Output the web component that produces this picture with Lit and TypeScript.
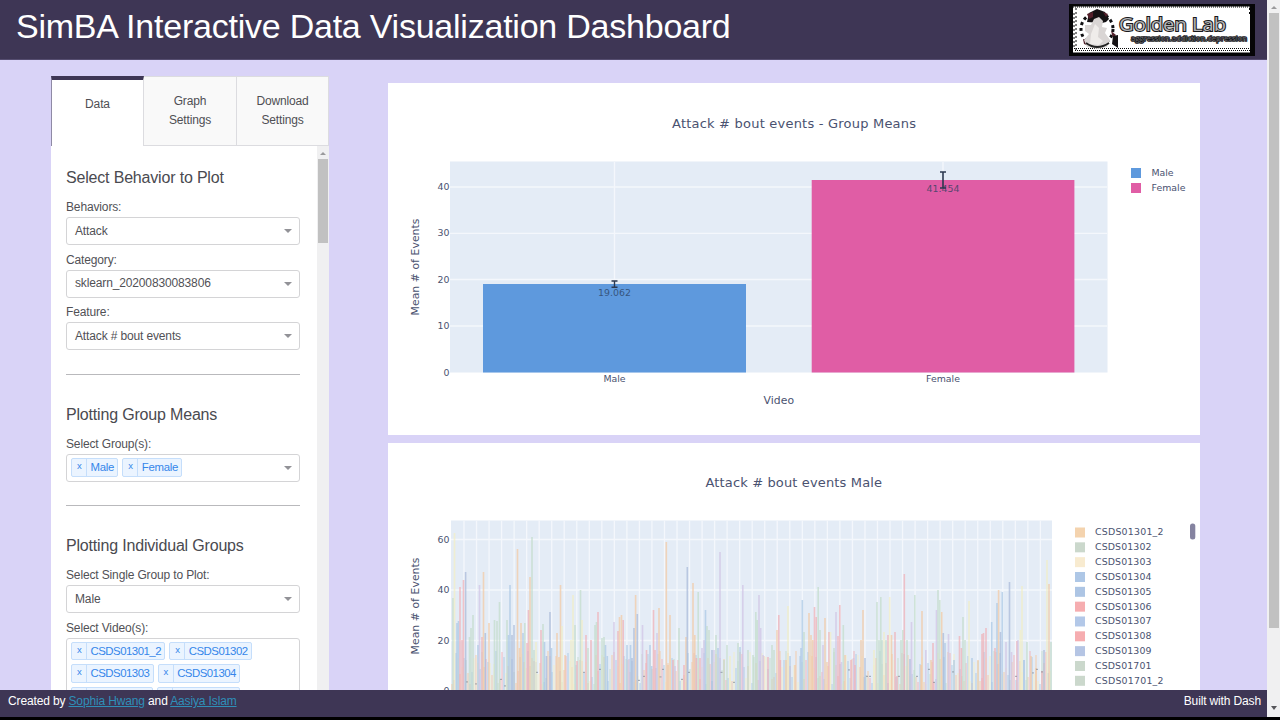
import { LitElement, html, svg, css } from "lit";
import { customElement, property } from "lit/decorators.js";

type Bar = [number, number, string];

const TINTS: Record<string, string> = {
  o: "#f3c9a2",
  y: "#f3efc4",
  g: "#c2dccb",
  b: "#a9c8e4",
  s: "#a8b9d8",
  r: "#f0afb6",
  p: "#d0c4e4",
};

// Tall bars of the individual plot: x, top y, tint.
const PEAKS: Bar[] = [
  [453, 598, "g"], [454.5, 533, "y"], [457, 623, "b"], [458.5, 621, "b"], [460, 587, "r"], [462, 640, "r"], [463.5, 580, "r"], [465.6, 572, "s"],
  [469.5, 637, "g"], [471, 628, "g"], [473, 615, "g"], [478, 645, "b"], [479.5, 585, "p"], [482, 637, "r"], [483.5, 572, "o"], [485.3, 633, "s"],
  [489, 623, "o"], [494.5, 620, "g"], [497, 621, "g"], [499.5, 602, "g"], [507, 620, "g"], [508.5, 635, "b"], [510, 585, "b"], [512, 635, "s"], [514, 625, "s"],
  [517.5, 549, "o"], [519.5, 648, "o"], [521, 623, "o"], [523, 633, "b"], [524.8, 623, "g"], [527, 643, "r"], [528.5, 610, "r"], [530, 577, "o"], [532, 537, "g"], [534, 650, "g"],
  [536, 642, "y"], [541, 630, "r"], [543, 624, "g"], [544.5, 642, "b"], [546.5, 656, "s"], [550, 612, "s"], [551.5, 648, "b"], [557, 633, "o"], [559, 657, "o"], [560.5, 585, "o"],
  [562, 626, "y"], [565, 655, "o"], [571, 640, "y"], [573, 595, "y"], [575, 625, "g"], [577, 661, "r"], [580.5, 590, "g"], [582, 620, "y"], [586, 635, "r"], [588, 648, "g"],
  [591, 640, "r"], [595, 625, "g"], [596.5, 622, "g"], [598, 612, "r"], [602, 638, "g"], [604, 637, "g"], [605.5, 645, "b"], [607.3, 656, "b"], [614, 622, "p"], [618, 631, "r"],
  [619.5, 617, "o"], [621.5, 615, "o"], [623.2, 620, "r"], [627, 645, "b"], [629, 659, "p"], [630.5, 645, "b"], [632, 658, "s"], [634, 628, "s"], [635.6, 595, "o"], [637.3, 614, "s"],
  [642.5, 625, "p"], [646.5, 650, "r"], [650, 645, "b"], [651.7, 666, "b"], [653.5, 610, "r"], [655, 650, "r"], [657, 633, "p"], [659, 608, "o"], [666.3, 542, "o"], [668, 665, "o"],
  [670, 615, "o"], [673, 660, "r"], [675, 666, "p"], [679, 628, "g"], [684, 665, "r"], [686, 637, "o"], [687.3, 567, "s"], [693, 583, "o"], [694.8, 635, "o"], [696.5, 658, "r"], [698.2, 592, "g"],
  [700, 658, "r"], [702, 648, "p"], [704, 640, "p"], [705.5, 610, "b"], [707, 626, "g"], [709, 630, "g"], [712, 650, "s"], [714, 650, "p"], [716, 635, "g"], [718, 648, "b"],
  [720, 552, "p"], [724, 660, "g"], [727, 645, "g"], [730, 656, "y"], [738, 643, "g"], [740, 647, "b"], [742.8, 585, "p"], [748, 650, "g"], [753, 655, "g"], [755.8, 612, "g"], [757.2, 620, "g"],
  [759, 595, "p"], [760.7, 628, "p"], [763, 655, "p"], [768, 657, "r"], [772, 645, "g"], [774, 650, "g"], [777, 630, "o"], [778.8, 615, "r"], [780.4, 660, "r"], [786, 660, "o"], [788, 606, "y"],
  [790, 656, "b"], [795, 665, "o"], [801, 648, "b"], [802.3, 600, "b"], [804, 632, "g"], [809, 613, "o"], [811, 635, "o"], [812.8, 640, "o"], [814.5, 607, "r"], [816.2, 617, "r"], [818.2, 587, "g"],
  [820, 630, "g"], [823, 645, "p"], [825, 618, "o"], [827, 662, "o"], [829, 632, "r"], [830.5, 632, "y"], [834, 648, "g"], [836, 612, "p"], [838, 636, "r"], [839.8, 605, "r"], [841.5, 662, "p"], [843.3, 625, "g"],
  [845, 655, "o"], [851, 660, "r"], [853.5, 658, "p"], [855, 665, "r"], [861, 640, "o"], [863, 610, "o"], [865, 658, "s"], [874, 650, "y"], [877, 602, "g"], [879, 640, "g"], [880.8, 597, "g"], [882, 640, "g"],
  [884, 632, "y"], [886, 640, "g"], [888, 635, "r"], [889.7, 597, "y"], [891.5, 635, "o"], [895, 632, "r"], [897, 676, "r"], [901, 640, "g"], [902.8, 630, "g"], [904.3, 574, "r"], [907, 640, "g"],
  [910, 659, "s"], [911.5, 622, "p"], [914.8, 595, "g"], [921, 665, "o"], [922, 611, "o"], [925.8, 650, "p"], [931, 660, "o"], [933, 643, "r"], [936.5, 610, "p"], [938, 590, "g"], [939.8, 600, "g"], [941.7, 612, "o"],
  [943.3, 633, "s"], [945, 643, "b"], [948.5, 634, "p"], [954, 660, "b"], [959.5, 636, "r"], [961.5, 648, "r"], [963, 617, "g"], [965, 640, "g"], [969, 601, "y"], [972, 658, "b"], [978, 660, "o"], [982, 634, "r"],
  [983.5, 633, "r"], [986, 628, "r"], [991.7, 622, "b"], [995, 648, "r"], [997, 603, "b"], [998.6, 590, "o"], [1000.5, 632, "s"], [1002.3, 592, "b"], [1006, 642, "p"], [1009.5, 582, "s"], [1011.5, 652, "p"], [1017, 641, "r"], [1018, 640, "p"],
  [1020.3, 630, "y"], [1022, 586, "y"], [1024, 660, "b"], [1027, 642, "g"], [1031, 656, "o"], [1036, 668, "o"], [1042, 671, "r"], [1044, 650, "s"], [1047, 560, "y"], [1049, 584, "o"], [1051, 642, "g"],
];

// Short bars that fill the gaps between the peaks.
const TINT_ORDER = "oygbyrpogybgyo";
const LOW_BARS: Bar[] = Array.from({ length: 300 }, (_, i): Bar => [
  452 + i * 2,
  690 - (6 + ((i * 37 + ((i * i * 7) % 23) * 5) % 34)),
  TINT_ORDER[(i * 5 + (i >> 2)) % TINT_ORDER.length],
]);

const CAPS: [number, number][] = [
  [467, 682], [476, 684], [501, 679.5], [505, 686], [537, 672.5], [584, 672.5], [600, 669.5], [639, 680.5], [644, 676.5],
  [660.5, 677], [663, 669.5], [682, 679.5], [689, 672.5], [721.5, 672.5], [734, 682.5], [849, 670], [867, 676.5], [870, 676.5],
  [899, 676.5], [917, 676.5], [929, 669.5], [934, 682.5], [953, 672], [1016, 676.5], [1033, 673], [1037, 669.5], [1042, 672],
];

const LEGEND: [string, string][] = [
  ["CSDS01301_2", "#f4d3ae"], ["CSDS01302", "#cbd8cc"], ["CSDS01303", "#f8ebd0"], ["CSDS01304", "#aec7e6"],
  ["CSDS01305", "#adc5e4"], ["CSDS01306", "#f6adb0"], ["CSDS01307", "#b3c8e8"], ["CSDS01308", "#f6adb0"],
  ["CSDS01309", "#b5c5e4"], ["CSDS01701", "#cbd8cc"], ["CSDS01701_2", "#cbd8cc"],
];

const chartText = css`
  :host { display: block; background: #fff; }
  svg { display: block; width: 100%; height: 100%; }
  text { font-family: "DejaVu Sans", Verdana, sans-serif; fill: #4a5270; }
  .title { font-size: 13px; }
  .axis { font-size: 10.8px; }
  .tick { font-size: 9.4px; }
  .end { text-anchor: end; }
  .value { font-size: 9.4px; fill: #2a3f5f; opacity: 0.75; }
  .plot { fill: #e4ecf6; }
  .grid { stroke: #f4f7fc; stroke-width: 1.3; fill: none; }
  .err { stroke: #2b3850; fill: none; }
`;

@customElement("means-chart")
class MeansChart extends LitElement {
  static styles = chartText;

  render() {
    return html`
      <svg viewBox="388 83 812 352">
        <text class="title" x="672" y="128" textLength="244">Attack # bout events - Group Means</text>
        <rect class="plot" x="450" y="161.5" width="657.5" height="211"></rect>
        <path class="grid" d="M450 187H1107 M450 233.3H1107 M450 279.5H1107 M450 326H1107 M614.5 162V372 M943 162V372"></path>
        <rect x="483" y="284" width="263" height="88.5" fill="#5e99dd"></rect>
        <rect x="811.7" y="180" width="262.7" height="192.5" fill="#e05da5"></rect>
        <text class="value" x="598" y="296" textLength="33">19.062</text>
        <text class="value" x="926.5" y="192" textLength="33">41.454</text>
        <path class="err" stroke-width="1.4" d="M614.5 281V287.3 M611.5 281H617.5 M611.5 287.3H617.5"></path>
        <path class="err" stroke-width="1.6" d="M943 172V188 M940 172H946 M940 188H946"></path>
        ${[40, 30, 20, 10, 0].map(
          (n, i) => svg`<text class="tick end" x="449.5" y=${189.7 + i * 46.5}>${n}</text>`,
        )}
        <text class="tick" x="603.5" y="382" textLength="22">Male</text>
        <text class="tick" x="926" y="382" textLength="34">Female</text>
        <text class="axis" x="763.5" y="404" textLength="30.5">Video</text>
        <text class="axis" transform="translate(418.5 315.5) rotate(-90)" textLength="97">Mean # of Events</text>
        <rect x="1131" y="168" width="10" height="10" fill="#5e99dd"></rect>
        <rect x="1131" y="183" width="10" height="10" fill="#e05da5"></rect>
        <text class="tick" x="1151.5" y="176" textLength="22">Male</text>
        <text class="tick" x="1151.5" y="191" textLength="34">Female</text>
      </svg>
    `;
  }
}

@customElement("group-chart")
class GroupChart extends LitElement {
  static styles = chartText;

  render() {
    const vertical = Array.from({ length: 47 }, (_, i) => `M${464 + i * 12.53} 520.5V690`).join(" ");
    const bar = ([x, y, tint]: Bar, opacity: number) =>
      svg`<rect x=${x - 0.8} y=${y} width="1.6" height=${690 - y} fill=${TINTS[tint]} opacity=${opacity}></rect>`;
    return html`
      <svg viewBox="388 443 812 247">
        <text class="title" x="705.5" y="487" textLength="176.5">Attack # bout events Male</text>
        <rect class="plot" x="451" y="520.5" width="601" height="170"></rect>
        <path class="grid" d="${vertical} M451 539.5H1052 M451 590H1052 M451 640.5H1052"></path>
        ${LOW_BARS.map((b) => bar(b, 0.55))}
        ${PEAKS.map((b) => bar(b, 0.72))}
        ${CAPS.map(([x, y]) => svg`<rect x=${x - 1} y=${y - 0.7} width="2" height="1.2" fill="#7f8593" opacity="0.6"></rect>`)}
        ${[60, 40, 20, 0].map(
          (n, i) => svg`<text class="tick end" x="449.5" y=${543 + i * 50.4}>${n}</text>`,
        )}
        <text class="axis" transform="translate(418.5 654.5) rotate(-90)" textLength="97">Mean # of Events</text>
        ${LEGEND.map(
          ([name, color], i) => svg`
            <rect x="1075" y=${527.5 + i * 14.83} width="10" height="10" fill=${color}></rect>
            <text class="tick" x="1095" y=${535.4 + i * 14.83} textLength=${name.length > 9 ? 68.5 : 56.5}>${name}</text>`,
        )}
        <rect x="1190" y="523.5" width="5.3" height="16" rx="2.5" fill="#8583a0"></rect>
      </svg>
    `;
  }
}

@customElement("select-box")
class SelectBox extends LitElement {
  @property() label = "";
  @property() value = "";
  @property({ type: Array }) chips: string[] = [];
  @property({ type: Boolean }) tall = false;

  static styles = css`
    :host { display: block; color: #515156; }
    .label { padding-top: 5.5px; height: 19px; line-height: 19px; }
    .box {
      box-sizing: border-box; height: 28px; border: 1px solid #d4d4d6; border-radius: 3px;
      display: flex; align-items: center; justify-content: space-between; padding: 0 7px 0 8px; background: #fff;
    }
    .box.multi { padding-left: 4px; }
    .box.tall { height: 80px; align-items: flex-start; padding-top: 3px; }
    .value { padding-bottom: 0.4px; }
    .arrow { border: 4px solid transparent; border-top-color: #929297; border-bottom: 0; }
    .chips { display: flex; flex-wrap: wrap; gap: 4px; }
    .tall .chips { width: 190px; }
    .chip {
      box-sizing: border-box; height: 18.7px; display: flex; border: 1px solid #c5defb;
      border-radius: 2px; background: #ebf4ff; color: #3586ea; font-size: 11.4px; line-height: 16px; letter-spacing: -0.5px;
    }
    .x { width: 14px; text-align: center; border-right: 1px solid #c5defb; font-size: 9.5px; line-height: 14.5px; }
    .name { padding: 0 3.3px 0 3.5px; }
    .short .name { letter-spacing: -0.3px; }
    .name:empty { width: 58.5px; }
  `;

  render() {
    const multi = this.chips.length > 0;
    return html`
      <div class="label">${this.label}</div>
      <div class="box ${multi ? "multi" : ""} ${this.tall ? "tall" : "short"}">
        ${multi
          ? html`<div class="chips">
              ${this.chips.map(
                (c) => html`<div class="chip"><span class="x">${c ? "x" : ""}</span><span class="name">${c || null}</span></div>`,
              )}
            </div>`
          : html`<span class="value">${this.value}</span>`}
        ${this.tall ? "" : html`<span class="arrow"></span>`}
      </div>
    `;
  }
}

@customElement("lab-logo")
class LabLogo extends LitElement {
  static styles = css`
    :host { display: block; width: 186px; height: 52px; }
    svg { display: block; }
    .name {
      font: 500 18.5px "Open Sans", sans-serif; fill: #b4b4b6; stroke: #19191b; stroke-width: 2px; paint-order: stroke;
    }
    .sub { font: 7.6px "Open Sans", sans-serif; fill: #6a6a70; stroke: #17171a; stroke-width: 1.7px; paint-order: stroke; }
  `;

  render() {
    return html`
      <svg width="186" height="52" viewBox="0 0 186 52">
        <rect width="186" height="52" fill="#050507"></rect>
        <rect x="4" y="2.5" width="177" height="46" fill="#fff"></rect>
        <path d="M4 3H181" stroke="#050507" stroke-dasharray="1 1"></path>
        <path d="M7 4V48 M5 9V44 M180.5 4V11" stroke="#050507" stroke-dasharray="2 2"></path>
        <path d="M5 44.5H182 M6 46.5H181" stroke="#050507" stroke-dasharray="1 1"></path>
        <circle cx="28" cy="25" r="16" fill="none" stroke="#111113" stroke-width="3" stroke-dasharray="3 3"></circle>
        <path d="M18 18L20 9L28 5L36 8L40 15L37 18L33 19Z" fill="#151214"></path>
        <path d="M18 10L24 8V13L20 15Z M34 8L39 10L37 13Z M42 27L47 31L44 34Z M14 35L20 37V42L15 40Z" fill="#54202b"></path>
        <path d="M25 15L30 13L34 17L33 23L38 24L36 29L41 36L38 43L29 45L18 43L15 36L20 30L16 27V21L22 21Z" fill="#d9d5d4"></path>
        <path d="M26 20L30 24L29 33L34 37L30 41L21 40L22 30Z" fill="#efecea"></path>
        <path d="M44 32L49 31V44L43 40Z" fill="#151214"></path>
        <path d="M17 39Q28 47 40 39" fill="none" stroke="#222" stroke-width="2"></path>
        <text class="name" x="50" y="27" textLength="107" lengthAdjust="spacingAndGlyphs">Golden Lab</text>
        <text class="sub" x="62" y="37" textLength="116" lengthAdjust="spacingAndGlyphs">aggression.addiction.depression</text>
      </svg>
    `;
  }
}

@customElement("app-root")
class AppRoot extends LitElement {
  static styles = css`
    :host {
      display: grid; grid-template-rows: 717px 3px; width: 1280px; height: 720px; overflow: hidden;
      font: 12px "Liberation Sans", Arial, sans-serif; letter-spacing: -0.14px; color: #4f4f54; background: #000;
    }
    .window { display: grid; grid-template-columns: 1267px 13px; height: 717px; }
    .page { display: grid; grid-template-rows: 60px 630px 27px; background: #d9d3f7; }
    header {
      background: #3e3655; display: flex; justify-content: space-between; align-items: flex-start;
      padding: 4px 12px 0 16px; box-sizing: border-box; border-bottom: 1px solid #554d70;
    }
    h1 { margin: 0; font-size: 34px; letter-spacing: -0.23px; line-height: 45px; font-weight: 400; color: #fff; white-space: nowrap; }
    main { display: flex; overflow: hidden; padding-left: 51px; gap: 59px; }
    .side { width: 278px; padding-top: 16px; display: flex; flex-direction: column; flex: none; }
    .tabs { display: grid; grid-template-columns: 93px 93px 92px; height: 70px; flex: none; }
    .tab {
      box-sizing: border-box; border: 1px solid #dcdce0; border-left-width: 0; background: #f9f9f9;
      display: flex; align-items: center; justify-content: center; text-align: center; line-height: 19px; padding: 0 16px 1px;
    }
    .tab.on { background: #fff; border: 0; border-top: 4px solid #3e3655; border-left: 1px solid #8f8aa5; border-right: 1px solid #dcdce0; padding-bottom: 18px; }
    .body { display: grid; grid-template-columns: 266px 12px; height: 544px; overflow: hidden; background: #fff; }
    .form { padding: 22px 17px 0 15px; }
    h2 { margin: 0 0 4.5px; font-size: 16px; letter-spacing: -0.18px; line-height: 20px; height: 20px; font-weight: 400; color: #4a4a50; }
    hr { border: 0; height: 1px; background: #b9b9bc; margin: 23.5px 0 30px; }
    .bar { background: #f0f0f1; display: flex; flex-direction: column; align-items: center; }
    .up, .down { border: 3px solid transparent; }
    .up { border-bottom: 3px solid #9a9a9c; border-top: 0; }
    .down { border-top: 4px solid #55555a; border-bottom: 0; margin-top: auto; margin-bottom: 7px; }
    .thumb { background: #c1c1c1; width: 10px; }
    .bar.inner .up { margin: 6px 0 4px; }
    .bar.inner .thumb { height: 84px; }
    .bar.outer .up { margin: 6px 0 4px; }
    .bar.outer .thumb { height: 615px; width: 10px; }
    .charts { width: 812px; padding-top: 23px; display: flex; flex-direction: column; gap: 8px; flex: none; letter-spacing: 0; }
    means-chart { height: 352px; }
    group-chart { height: 247px; flex: none; }
    footer {
      background: #3e3655; color: #fff; display: flex; justify-content: space-between; align-items: center;
      padding: 0 6px 5px 8px; box-sizing: border-box;
    }
    lab-logo { letter-spacing: 0; }
    a { color: #2f8fb8; text-decoration: underline; }
  `;

  render() {
    return html`
      <div class="window">
        <div class="page">
          <header><h1>SimBA Interactive Data Visualization Dashboard</h1><lab-logo></lab-logo></header>
          <main>
            <div class="side">
              <div class="tabs">
                <div class="tab on">Data</div>
                <div class="tab">Graph Settings</div>
                <div class="tab">Download Settings</div>
              </div>
              <div class="body">
                <div class="form">
                  <h2>Select Behavior to Plot</h2>
                  <select-box label="Behaviors:" value="Attack"></select-box>
                  <select-box label="Category:" value="sklearn_20200830083806"></select-box>
                  <select-box label="Feature:" value="Attack # bout events"></select-box>
                  <hr />
                  <h2>Plotting Group Means</h2>
                  <select-box label="Select Group(s):" .chips=${["Male", "Female"]}></select-box>
                  <hr />
                  <h2>Plotting Individual Groups</h2>
                  <select-box label="Select Single Group to Plot:" value="Male"></select-box>
                  <select-box
                    label="Select Video(s):"
                    tall
                    .chips=${["CSDS01301_2", "CSDS01302", "CSDS01303", "CSDS01304", "", ""]}
                  ></select-box>
                </div>
                <div class="bar inner"><span class="up"></span><span class="thumb"></span></div>
              </div>
            </div>
            <div class="charts"><means-chart></means-chart><group-chart></group-chart></div>
          </main>
          <footer>
            <span>Created by <a>Sophia Hwang</a> and <a>Aasiya Islam</a></span>
            <span>Built with Dash</span>
          </footer>
        </div>
        <div class="bar outer"><span class="up"></span><span class="thumb"></span><span class="down"></span></div>
      </div>
    `;
  }
}
